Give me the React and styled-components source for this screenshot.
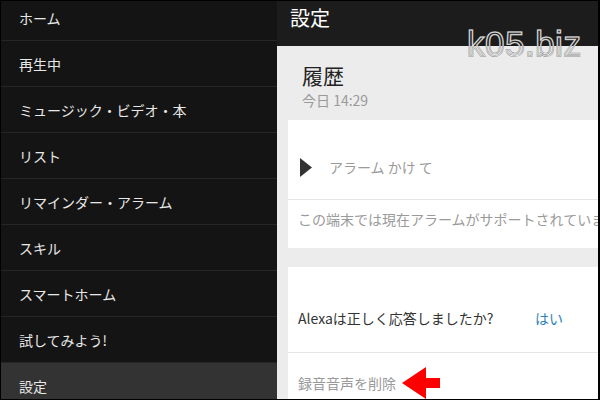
import styled, { createGlobalStyle } from 'styled-components'

const GlobalStyle = createGlobalStyle`
  html, body {
    margin: 0;
    padding: 0;
    background: #000;
  }
  * {
    box-sizing: border-box;
  }
`

const menu = [
  'ホーム',
  '再生中',
  'ミュージック・ビデオ・本',
  'リスト',
  'リマインダー・アラーム',
  'スキル',
  'スマートホーム',
  '試してみよう!',
  '設定',
]

const App = () => {
  return (
    <>
      <GlobalStyle />
      <Frame>
        <Sidebar>
          <MenuList>
            {menu.map((label) => (
              <MenuItem key={label} $active={label === '設定'}>
                {label}
              </MenuItem>
            ))}
          </MenuList>
        </Sidebar>
        <Main>
          <Header>設定</Header>
          <Content>
            <TitleBlock>
              <Title>履歴</Title>
              <Stamp>今日 14:29</Stamp>
            </TitleBlock>
            <Card>
              <Row $pad="36px 12px 21px">
                <PlayIcon width="12" height="19" viewBox="0 0 12 19">
                  <polygon points="0,0 12,9.5 0,19" fill="#333" />
                </PlayIcon>
                <Muted>アラーム かけ て</Muted>
              </Row>
              <Row $pad="8px 10px 18px" $line>
                <Muted>この端末では現在アラームがサポートされていません。</Muted>
              </Row>
            </Card>
            <Card $gap>
              <Row $pad="40px 10px 23px">
                <Question>Alexaは正しく応答しましたか?</Question>
                <Answer>はい</Answer>
              </Row>
              <Row $pad="14px 10px 20px" $line>
                <Muted>録音音声を削除</Muted>
                <Arrow width="38" height="32" viewBox="0 0 38 32">
                  <polygon
                    points="0,16 24,0 24,11 38,11 38,21 24,21 24,32"
                    fill="#ff0000"
                  />
                </Arrow>
              </Row>
            </Card>
          </Content>
          <Watermark data-text="k05.biz">k05.biz</Watermark>
        </Main>
      </Frame>
    </>
  )
}

const Frame = styled.div`
  width: 600px;
  height: 400px;
  border: 1px solid #000;
  border-right-width: 2px;
  display: grid;
  grid-template-columns: 276px 1fr;
  overflow: hidden;
  font-family: 'Noto Sans CJK JP', 'Noto Sans', sans-serif;
`

const Sidebar = styled.nav`
  background: #141414;
  overflow: hidden;
`

const MenuList = styled.ul`
  list-style: none;
  margin: -6px 0 0;
  padding: 0;
`

const MenuItem = styled.li`
  height: 46px;
  display: flex;
  align-items: center;
  padding: 0 0 0 18px;
  border-bottom: 1px solid #262626;
  background: ${({ $active }) => ($active ? '#333' : 'transparent')};
  color: #e8e8e8;
  font-size: 14px;
`

const Main = styled.main`
  position: relative;
  display: flex;
  flex-direction: column;
  background: #ececec;
  overflow: hidden;
`

const Header = styled.header`
  height: 45px;
  flex: none;
  background: #1c1c1c;
  color: #fff;
  font-size: 20px;
  line-height: 34px;
  padding-left: 13px;
`

const Content = styled.section`
  padding: 16px 0 0 11px;
  display: flex;
  flex-direction: column;
`

const TitleBlock = styled.div`
  padding-left: 14px;
  margin-bottom: 11px;
`

const Title = styled.h2`
  margin: 0;
  font-size: 21px;
  font-weight: 400;
  line-height: 26px;
  color: #222;
`

const Stamp = styled.div`
  margin-top: 3px;
  font-size: 14px;
  line-height: 18px;
  color: #9a9a9a;
`

const Card = styled.div`
  background: #fff;
  width: 330px;
  margin-top: ${({ $gap }) => ($gap ? '19px' : '0')};
`

const Row = styled.div`
  display: flex;
  align-items: center;
  padding: ${({ $pad }) => $pad};
  border-top: ${({ $line }) => ($line ? '1px solid #e6e6e6' : 'none')};
  font-size: 14px;
  line-height: 22px;
  white-space: nowrap;
`

const PlayIcon = styled.svg`
  flex: none;
  margin-right: 17px;
`

const Muted = styled.span`
  color: #9a9a9a;
`

const Question = styled.span`
  width: 237px;
  color: #333;
`

const Answer = styled.span`
  color: #2e7fba;
`

const Arrow = styled.svg`
  flex: none;
  margin-left: 6px;
`

const Watermark = styled.div`
  position: absolute;
  top: 23px;
  left: 190px;
  font-family: 'Liberation Sans', Arial, sans-serif;
  font-weight: 400;
  font-size: 35px;
  line-height: 40px;
  letter-spacing: 0.5px;
  color: transparent;
  -webkit-text-stroke: 1.6px #8c8c8c;

  &::after {
    content: attr(data-text);
    position: absolute;
    left: 0;
    top: 0;
    -webkit-text-stroke: 0.5px #fff;
  }
`

export default App
